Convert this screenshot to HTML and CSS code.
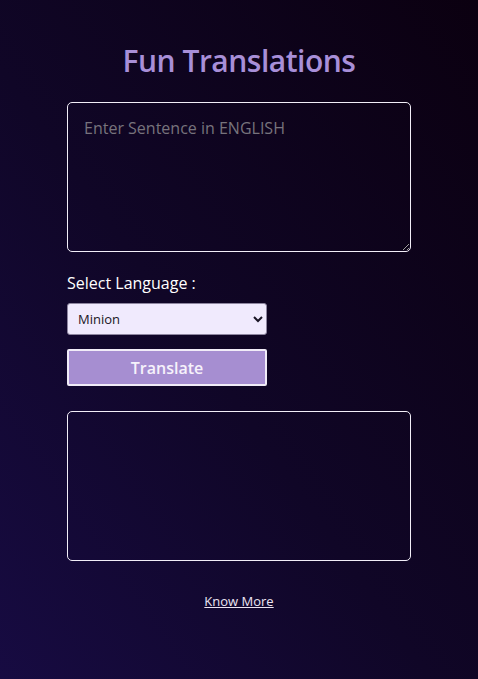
FILE: index.html
```html
<!DOCTYPE html>
<html lang="en">
<head>
<meta charset="utf-8">
<title>Fun Translations</title>
<link rel="stylesheet" href="styles.css">
</head>
<body>
<main class="app">
  <h1 class="title">Fun Translations</h1>
  <textarea class="box input" placeholder="Enter Sentence in ENGLISH"></textarea>
  <label class="label" for="lang">Select Language :</label>
  <select id="lang" class="select">
    <option>Minion</option>
  </select>
  <button class="btn">Translate</button>
  <div class="box output"></div>
  <a class="more" href="#">Know More</a>
</main>
</body>
</html>
```
FILE: styles.css
```css
html, body {
  margin: 0;
  padding: 0;
}
body {
  min-height: 100vh;
  background: linear-gradient(to top right, #170b42 0%, #100627 45%, #0b0010 100%);
  font-family: "Open Sans", "Noto Sans", sans-serif;
  color: #ffffff;
}
.app {
  width: 344px;
  margin: 0 auto;
  display: flex;
  flex-direction: column;
  align-items: flex-start;
  padding-top: 41px;
}
.title {
  align-self: center;
  margin: 0 0 21px;
  font-size: 30px;
  font-weight: 600;
  line-height: 40px;
  color: #a88fd8;
  letter-spacing: -0.5px;
}
.box {
  box-sizing: border-box;
  width: 344px;
  height: 150px;
  border: 1px solid #f2eef8;
  border-radius: 5px;
  background: transparent;
}
.input {
  padding: 14px 16px;
  font-family: inherit;
  font-size: 16px;
  color: #ddd;
  resize: vertical;
  outline: none;
}
.input::placeholder {
  color: #77737c;
}
.label {
  margin-top: 20px;
  font-size: 16px;
  line-height: 22px;
}
.select {
  margin-top: 9px;
  width: 200px;
  height: 32px;
  box-sizing: border-box;
  padding: 0 6px;
  font-family: inherit;
  font-size: 13px;
  color: #1a1525;
  background: #f0eafd;
  border: 1px solid #8e86a0;
  border-radius: 3px;
}
.btn {
  margin-top: 14px;
  width: 200px;
  height: 37px;
  box-sizing: border-box;
  background: #a68ed1;
  border: 2px solid #f1ecf8;
  border-radius: 2px;
  font-family: inherit;
  font-size: 16px;
  font-weight: 600;
  color: #f6f2fb;
}
.output {
  margin-top: 25px;
}
.more {
  align-self: center;
  margin-top: 31px;
  font-size: 13px;
  color: #ece4f2;
  text-decoration: underline;
}
```
